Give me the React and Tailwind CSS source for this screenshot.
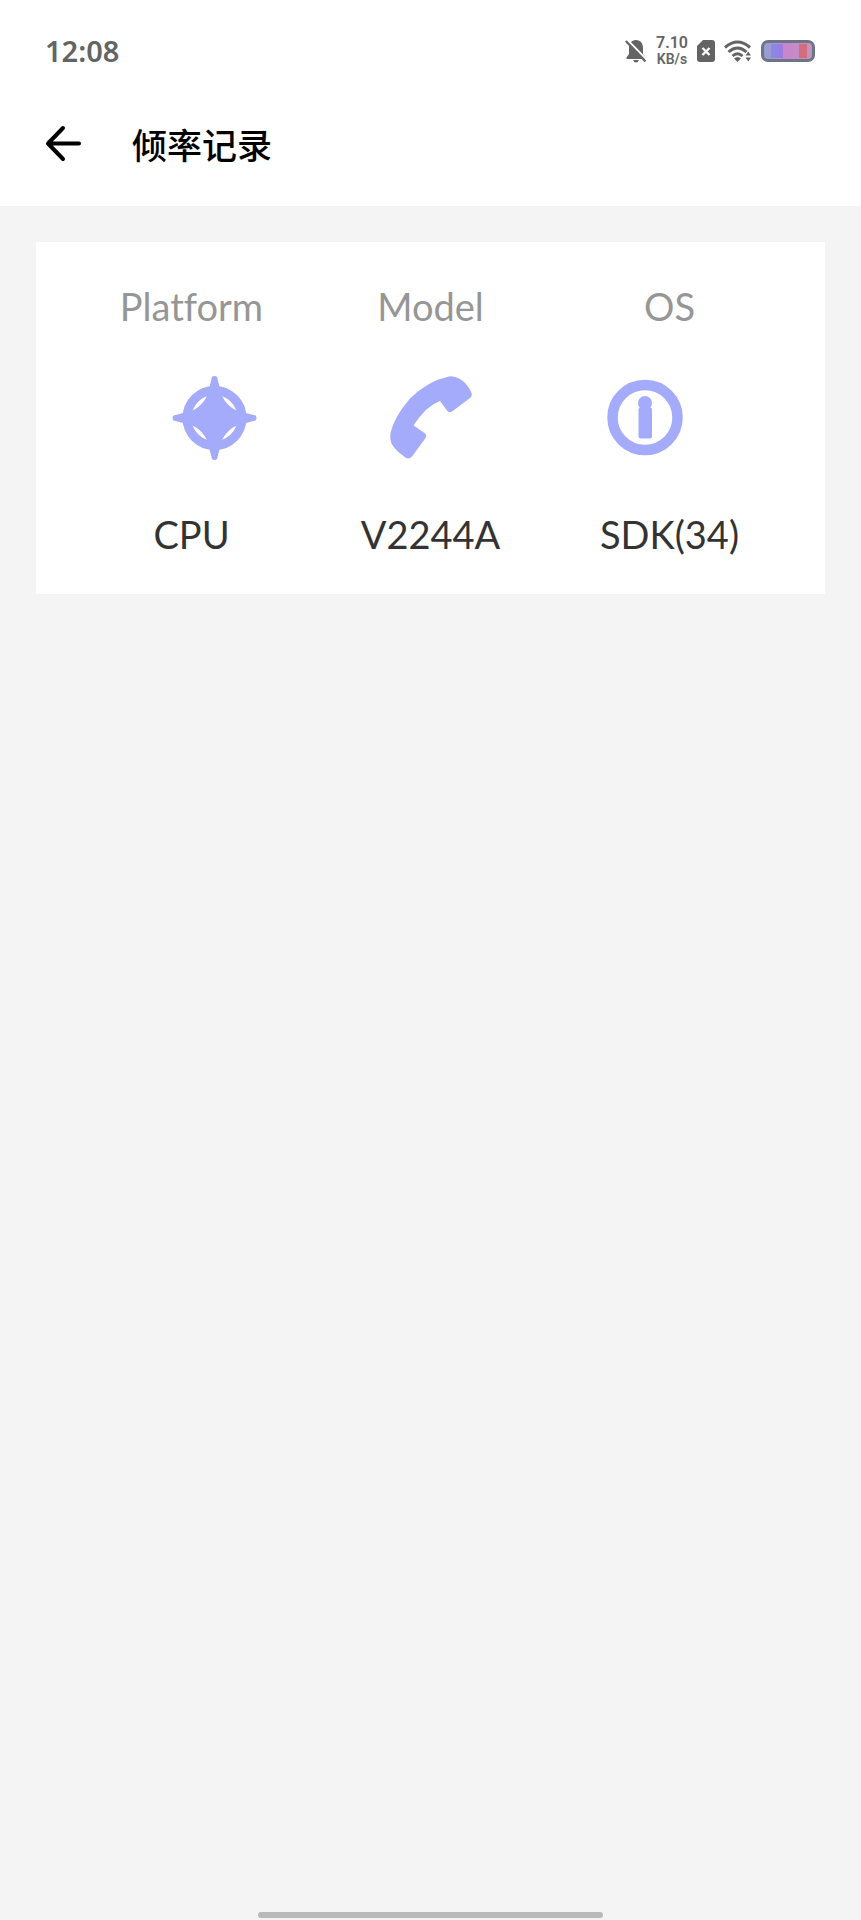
import React from 'react';

const device = [
  { label: 'Platform', value: 'CPU', Icon: TargetIcon },
  { label: 'Model', value: 'V2244A', Icon: PhoneIcon },
  { label: 'OS', value: 'SDK(34)', Icon: InfoIcon },
];

function TargetIcon() {
  return (
    <svg viewBox="0 0 88 88" className="h-[88px] w-[88px] text-[#a5abfb]" fill="currentColor" aria-hidden="true">
      <circle cx="43.500" cy="44" r="27.500" fill="none" stroke="currentColor" strokeWidth="9" />
      <path d="M40.500 5Q40.500 2 43.500 2Q46.500 2 46.500 5L51 22Q56 32 65.500 36.500L82.500 41Q85.500 41 85.500 44Q85.500 47 82.500 47L65.500 51.500Q56 56 51 66L46.500 83Q46.500 86 43.500 86Q40.500 86 40.500 83L36 66Q31 56 21.500 51.500L4.500 47Q1.500 47 1.500 44Q1.500 41 4.500 41L21.500 36.500Q31 32 36 22Z" />
    </svg>
  );
}

function PhoneIcon() {
  return (
    <svg viewBox="0 0 88 88" className="h-[88px] w-[88px] text-[#a5abfb]" fill="currentColor" aria-hidden="true">
      <path d="M60 3Q66 1 73 5Q81 10 84.500 19Q85.500 22 83 24L65 37.500Q62 39.500 60 36.500L53 27Q39 32 26.500 51.500L37.500 59Q40 61 38.500 64L25 82.500Q22 86 18.500 83.500Q9 77 5 70.500Q2.500 66 3.500 59Q7 43 23 24.500Q41 7 60 3Z" />
    </svg>
  );
}

function InfoIcon() {
  return (
    <svg viewBox="0 0 88 88" className="h-[88px] w-[88px] text-[#a5abfb]" fill="currentColor" aria-hidden="true">
      <circle cx="43" cy="43.500" r="32.500" fill="none" stroke="currentColor" strokeWidth="10.500" />
      <circle cx="43" cy="29" r="7" />
      <rect x="36.500" y="33.500" width="13.500" height="31" rx="2" />
    </svg>
  );
}

function StatusBar() {
  return (
    <div className="flex h-[102px] items-center justify-between pr-[46px] pl-[45px] text-[#646464]">
      <time className="font-['Noto_Sans',sans-serif] text-[29px] leading-10 font-semibold">12:08</time>
      <div className="flex items-center gap-[9px]">
        {/* muted bell */}
        <svg viewBox="0 0 22 24" className="h-6 w-[22px]" aria-hidden="true">
          <path d="M11 1C6 1 4 5 4 9V15L1.500 18.500V20H20.500V18.500L18 15V9C18 5 16 1 11 1Z" fill="currentColor" />
          <path d="M8 21H14Q13 23.500 11 23.500Q9 23.500 8 21Z" fill="currentColor" />
          <path d="M2 .5L22 21" stroke="#fff" strokeWidth="2" />
          <path d="M.8 2L20.500 22.500" stroke="currentColor" strokeWidth="2.200" />
        </svg>
        <div className="text-center font-['Roboto',sans-serif] font-semibold">
          <div className="text-[16px] leading-[17px]">7.10</div>
          <div className="text-[14px] leading-[17px]">KB/s</div>
        </div>
        {/* sim card */}
        <svg viewBox="0 0 18 22" className="h-[22px] w-[18px]" aria-hidden="true">
          <path d="M6 0H15Q18 0 18 3V19Q18 22 15 22H3Q0 22 0 19V6Z" fill="currentColor" />
          <path d="M5.500 8L12.500 15M12.500 8L5.500 15" stroke="#fff" strokeWidth="2.400" />
        </svg>
        {/* wifi */}
        <svg viewBox="0 0 28 22" className="h-[22px] w-7" fill="none" stroke="currentColor" aria-hidden="true">
          <path d="M1 7.500Q13.500-3.500 26 7.500" strokeWidth="3" />
          <path d="M4.500 12Q13.500 4 22.500 12" strokeWidth="3" />
          <path d="M8.500 16Q13.500 11.500 18.500 16" strokeWidth="3" />
          <path d="M10 18.500Q13.500 15.500 17 18.500L13.500 22Z" fill="currentColor" stroke="none" />
          <path d="M21.500 15.500L24.300 11.500L27 15.500ZM21.500 17.500H27L24.300 21.500Z" fill="currentColor" stroke="none" />
        </svg>
        <div className="h-[22px] w-[54px] rounded-[7px] border-[3px] border-[#6d7486] bg-linear-to-r from-[#8fa0d3] via-[#ca86cb] to-[#c095bb] p-px">
          <div className="flex h-full items-stretch">
            <span className="ml-1.5 w-1.5 bg-[#8988e8]" />
            <span className="w-1.5 bg-[#9b7de0]" />
            <span className="ml-4 w-2 bg-[#d36d7d]" />
          </div>
        </div>
      </div>
    </div>
  );
}

export default function App() {
  return (
    <div className="flex min-h-screen flex-col bg-[#f4f4f4]">
      <header className="bg-white pb-5">
        <StatusBar />
        <div className="flex h-[84px] items-center gap-12 px-11">
          <button type="button" aria-label="Back">
            <svg viewBox="0 0 40 40" className="h-10 w-10" fill="none" stroke="#000" strokeWidth="4" strokeLinecap="round" strokeLinejoin="round" aria-hidden="true">
              <path d="M19 4L4 19.500L19 35M4 19.500H35" />
            </svg>
          </button>
          <h1 className="font-['Noto_Sans_CJK_SC',sans-serif] text-[35px] leading-[48px] font-medium text-black">倾率记录</h1>
        </div>
      </header>

      <main className="p-9">
        <section className="bg-white py-10 pb-9 text-center font-['Lato',sans-serif] text-[38px] leading-[48px] [font-variant-ligatures:none]">
          <div className="grid grid-cols-3 px-9 text-[#969696]">
            {device.map(item => (
              <div key={item.label}>{item.label}</div>
            ))}
          </div>
          <div className="mt-11 mb-12 flex justify-evenly px-2">
            {device.map(({ label, Icon }) => (
              <Icon key={label} />
            ))}
          </div>
          <div className="grid grid-cols-3 px-9 text-[#333]">
            {device.map(item => (
              <div key={item.label}>{item.value}</div>
            ))}
          </div>
        </section>
      </main>

      <div className="mx-auto mt-auto mb-0.5 h-1.5 w-2/5 rounded-full bg-[#b9b9b9]" />
    </div>
  );
}
